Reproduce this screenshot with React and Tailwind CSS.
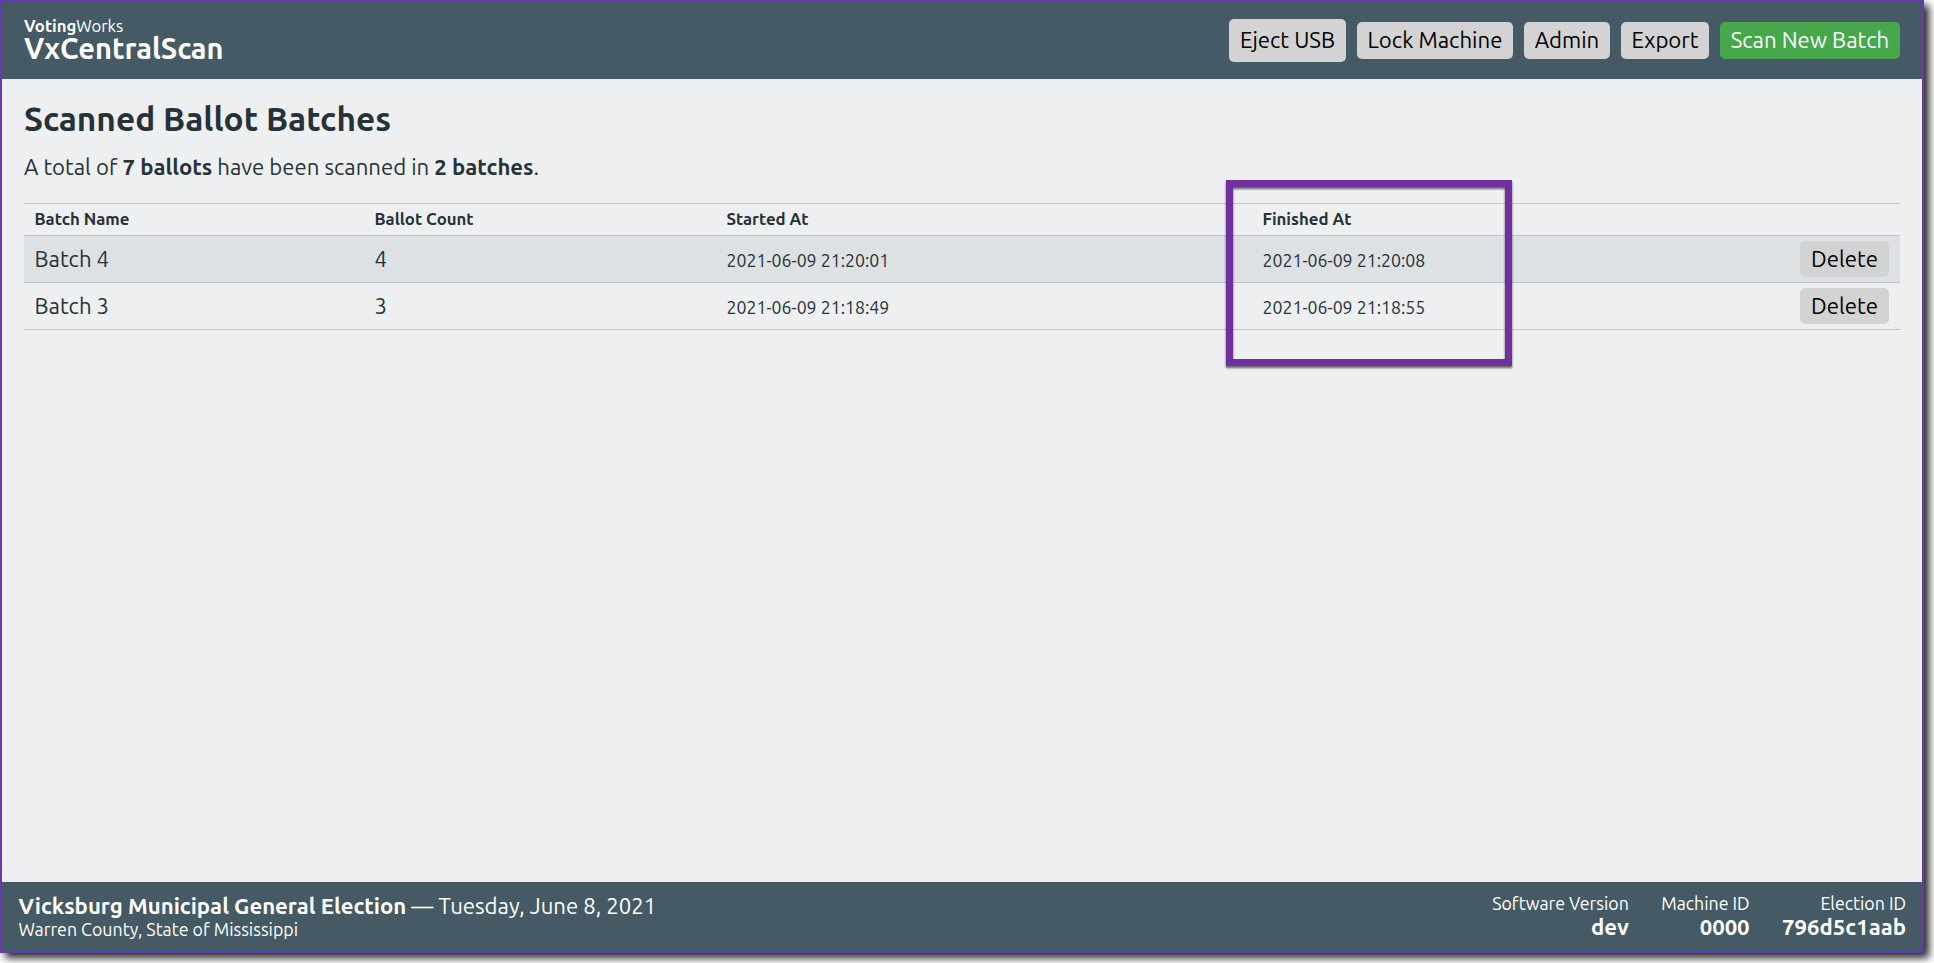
import React from "react";

const batches = [
  { name: "Batch 4", count: 4, started: "2021-06-09 21:20:01", finished: "2021-06-09 21:20:08" },
  { name: "Batch 3", count: 3, started: "2021-06-09 21:18:49", finished: "2021-06-09 21:18:55" },
];

function Button({ className, children }) {
  return (
    <button
      type="button"
      className={`flex shrink-0 items-center justify-center rounded-[5px] whitespace-nowrap text-[22.2px] leading-6 ${className}`}
    >
      {children}
    </button>
  );
}

function Header() {
  return (
    <header className="flex h-[77px] shrink-0 items-center justify-between bg-[#455a64] px-[22px] text-white">
      <div className="self-start pt-[15px]">
        <div className="text-[16.7px] leading-[18px]">
          <strong>Voting</strong>Works
        </div>
        <div className="text-[29px] leading-[26px] font-bold">VxCentralScan</div>
      </div>
      <nav className="flex items-center gap-[11px] text-black">
        <Button className="h-[43px] w-[117px] bg-[#d3d3d3] pb-px">Eject USB</Button>
        <Button className="h-[37px] w-[156px] bg-[#d3d3d3] pb-px">Lock Machine</Button>
        <Button className="h-[37px] w-[86px] bg-[#d3d3d3] pb-px">Admin</Button>
        <Button className="h-[37px] w-[88px] bg-[#d3d3d3] pb-px">Export</Button>
        <Button className="h-[37px] w-[180px] bg-[#47a74b] pb-px text-white">Scan New Batch</Button>
      </nav>
    </header>
  );
}

function BatchTable() {
  return (
    <table className="mt-5 w-full table-fixed border-separate border-spacing-0 border-b border-[#c0c6c9] text-left">
      <colgroup>
        <col className="w-[340px]" />
        <col className="w-[352px]" />
        <col className="w-[536px]" />
        <col className="w-[500px]" />
        <col />
      </colgroup>
      <thead>
        <tr className="text-[16.75px] leading-5 font-bold">
          <th className="h-8 border-t border-[#c0c6c9] pt-0 pb-0.5 pl-[10.5px]">Batch Name</th>
          <th className="h-8 border-t border-[#c0c6c9] pt-0 pb-0.5 pl-[10.5px]">Ballot Count</th>
          <th className="h-8 border-t border-[#c0c6c9] pt-0 pb-0.5 pl-[10.5px]">Started At</th>
          <th className="h-8 border-t border-[#c0c6c9] pt-0 pb-0.5 pl-[10.5px]">Finished At</th>
          <th className="h-8 border-t border-[#c0c6c9] p-0"></th>
        </tr>
      </thead>
      <tbody>
        {batches.map((b) => (
          <tr key={b.name} className="text-[22.15px] leading-8 odd:bg-[#dde1e4]">
            <td className="h-[47px] border-t border-[#bdc5ca] pt-0 pb-px pl-[10.5px]">{b.name}</td>
            <td className="h-[47px] border-t border-[#bdc5ca] pt-0 pb-px pl-[10.5px]">{b.count}</td>
            <td className="h-[47px] border-t border-[#bdc5ca] pt-0.5 pb-0 pl-[10.5px] text-[17.72px]">{b.started}</td>
            <td className="h-[47px] border-t border-[#bdc5ca] pt-0.5 pb-0 pl-[10.5px] text-[17.72px]">{b.finished}</td>
            <td className="h-[47px] border-t border-[#bdc5ca] py-0 pr-[11px]">
              <div className="flex justify-end">
                <Button className="h-9 w-[89px] bg-[#d3d3d3] text-black">Delete</Button>
              </div>
            </td>
          </tr>
        ))}
      </tbody>
    </table>
  );
}

function FooterStat({ label, value }) {
  return (
    <div className="text-right">
      <div className="text-[17.75px] leading-[22px]">{label}</div>
      <div className="text-[22.15px] leading-[25px] font-bold">{value}</div>
    </div>
  );
}

function Footer() {
  return (
    <footer className="flex h-[69px] shrink-0 items-start justify-between bg-[#455a64] pr-4 pl-[16.5px] text-white">
      <div className="pt-[10px]">
        <div className="text-[22.15px] leading-[27px]">
          <strong>Vicksburg Municipal General Election</strong> — Tuesday, June 8, 2021
        </div>
        <div className="text-[17.75px] leading-5">Warren County, State of Mississippi</div>
      </div>
      <div className="flex gap-[32.5px] pt-[10px]">
        <FooterStat label="Software Version" value="dev" />
        <FooterStat label="Machine ID" value="0000" />
        <FooterStat label="Election ID" value="796d5c1aab" />
      </div>
    </footer>
  );
}

export default function App() {
  return (
    <div className="h-[963px] w-[1934px] overflow-hidden bg-white font-[Ubuntu,'Noto_Sans',sans-serif]">
      <div className="relative flex h-[953px] w-[1924px] flex-col border-2 border-[#6737b5] bg-[#edeff0] text-[#263238] shadow-[5px_5px_8px_0px_rgba(0,0,0,0.85)]">
        <Header />
        <main className="grow px-[22px] pt-5">
          <h1 className="text-[33.4px] leading-[39px] font-bold">Scanned Ballot Batches</h1>
          <p className="mt-3 text-[22.15px] leading-[33px]">
            A total of <strong>7 ballots</strong> have been scanned in <strong>2 batches</strong>.
          </p>
          <BatchTable />
        </main>
        <Footer />
        <div className="pointer-events-none absolute top-[178px] left-[1224px] h-[186px] w-[286px] border-7 border-[#7030a0] drop-shadow-[0_2px_1px_rgba(0,0,0,0.6)]" />
      </div>
    </div>
  );
}
